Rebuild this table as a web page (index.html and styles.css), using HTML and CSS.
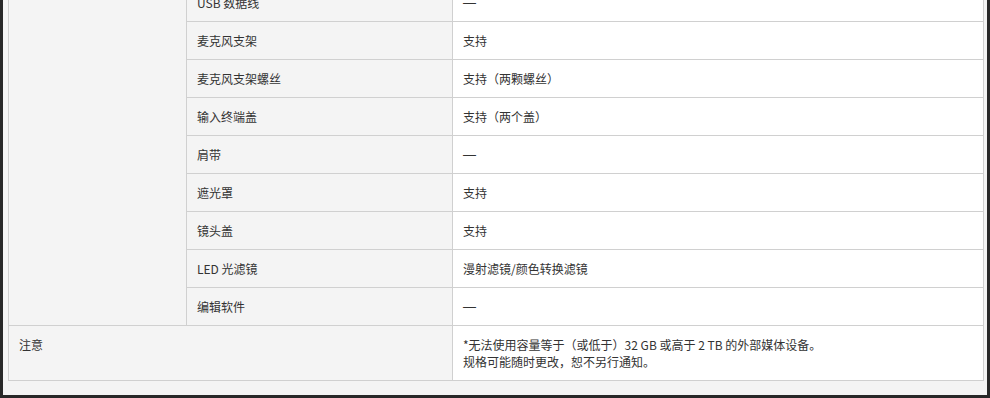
FILE: index.html
```html
<!DOCTYPE html>
<html lang="zh-CN">
<head>
<meta charset="UTF-8" />
<meta name="viewport" content="width=device-width, initial-scale=1" />
<title>规格</title>
<link rel="stylesheet" href="styles.css">
</head>
<body>

<div class="spec-wrap">
  <table class="spec-table">
    <colgroup>
      <col class="col-group">
      <col class="col-name">
      <col class="col-value">
    </colgroup>
    <tbody>
      <tr>
        <th class="group" rowspan="9"></th>
        <th>USB 数据线</th>
        <td><span class="dash">—</span></td>
      </tr>
      <tr>
        <th>麦克风支架</th>
        <td>支持</td>
      </tr>
      <tr>
        <th>麦克风支架螺丝</th>
        <td>支持（两颗螺丝）</td>
      </tr>
      <tr>
        <th>输入终端盖</th>
        <td>支持（两个盖）</td>
      </tr>
      <tr>
        <th>肩带</th>
        <td><span class="dash">—</span></td>
      </tr>
      <tr>
        <th>遮光罩</th>
        <td>支持</td>
      </tr>
      <tr>
        <th>镜头盖</th>
        <td>支持</td>
      </tr>
      <tr>
        <th>LED 光滤镜</th>
        <td>漫射滤镜/颜色转换滤镜</td>
      </tr>
      <tr>
        <th>编辑软件</th>
        <td><span class="dash">—</span></td>
      </tr>
      <tr class="note-row">
        <th colspan="2">注意</th>
        <td>*无法使用容量等于（或低于）32 GB 或高于 2 TB 的外部媒体设备。<br>规格可能随时更改，恕不另行通知。</td>
      </tr>
    </tbody>
  </table>
</div>

</body>
</html>
```

FILE: styles.css
```css
html {
  background-color: #282828;
}
body {
  margin: 0;
  font-family: "Noto Sans CJK SC", "Liberation Sans", sans-serif;
  font-size: 12px;
  color: #333;
}
.spec-wrap {
  background: #f4f4f4;
  margin: -17px 3px 0 3px;
  padding: 0 3px 14px 5px;
}
.spec-table {
  width: 100%;
  border-collapse: collapse;
  table-layout: fixed;
  border: 1px solid #d0d0d0;
}
.col-group {
  width: 178px;
}
.col-name {
  width: 266px;
}
.spec-table th,
.spec-table td {
  border: 1px solid #d0d0d0;
  height: 37px;
  box-sizing: border-box;
  padding: 10px 10px;
  line-height: 17px;
  text-align: left;
  vertical-align: top;
  font-weight: normal;
}
.spec-table th {
  background: #f4f4f4;
}
.spec-table td {
  background: #fff;
}
/* 全角破折号，宽度和汉字一致 */
.dash {
  display: inline-block;
  vertical-align: top;
  height: 17px;
  line-height: 17px;
  font-family: "Liberation Sans", sans-serif;
  font-size: 13px;
}
.note-row th,
.note-row td {
  height: 55px;
}
```
